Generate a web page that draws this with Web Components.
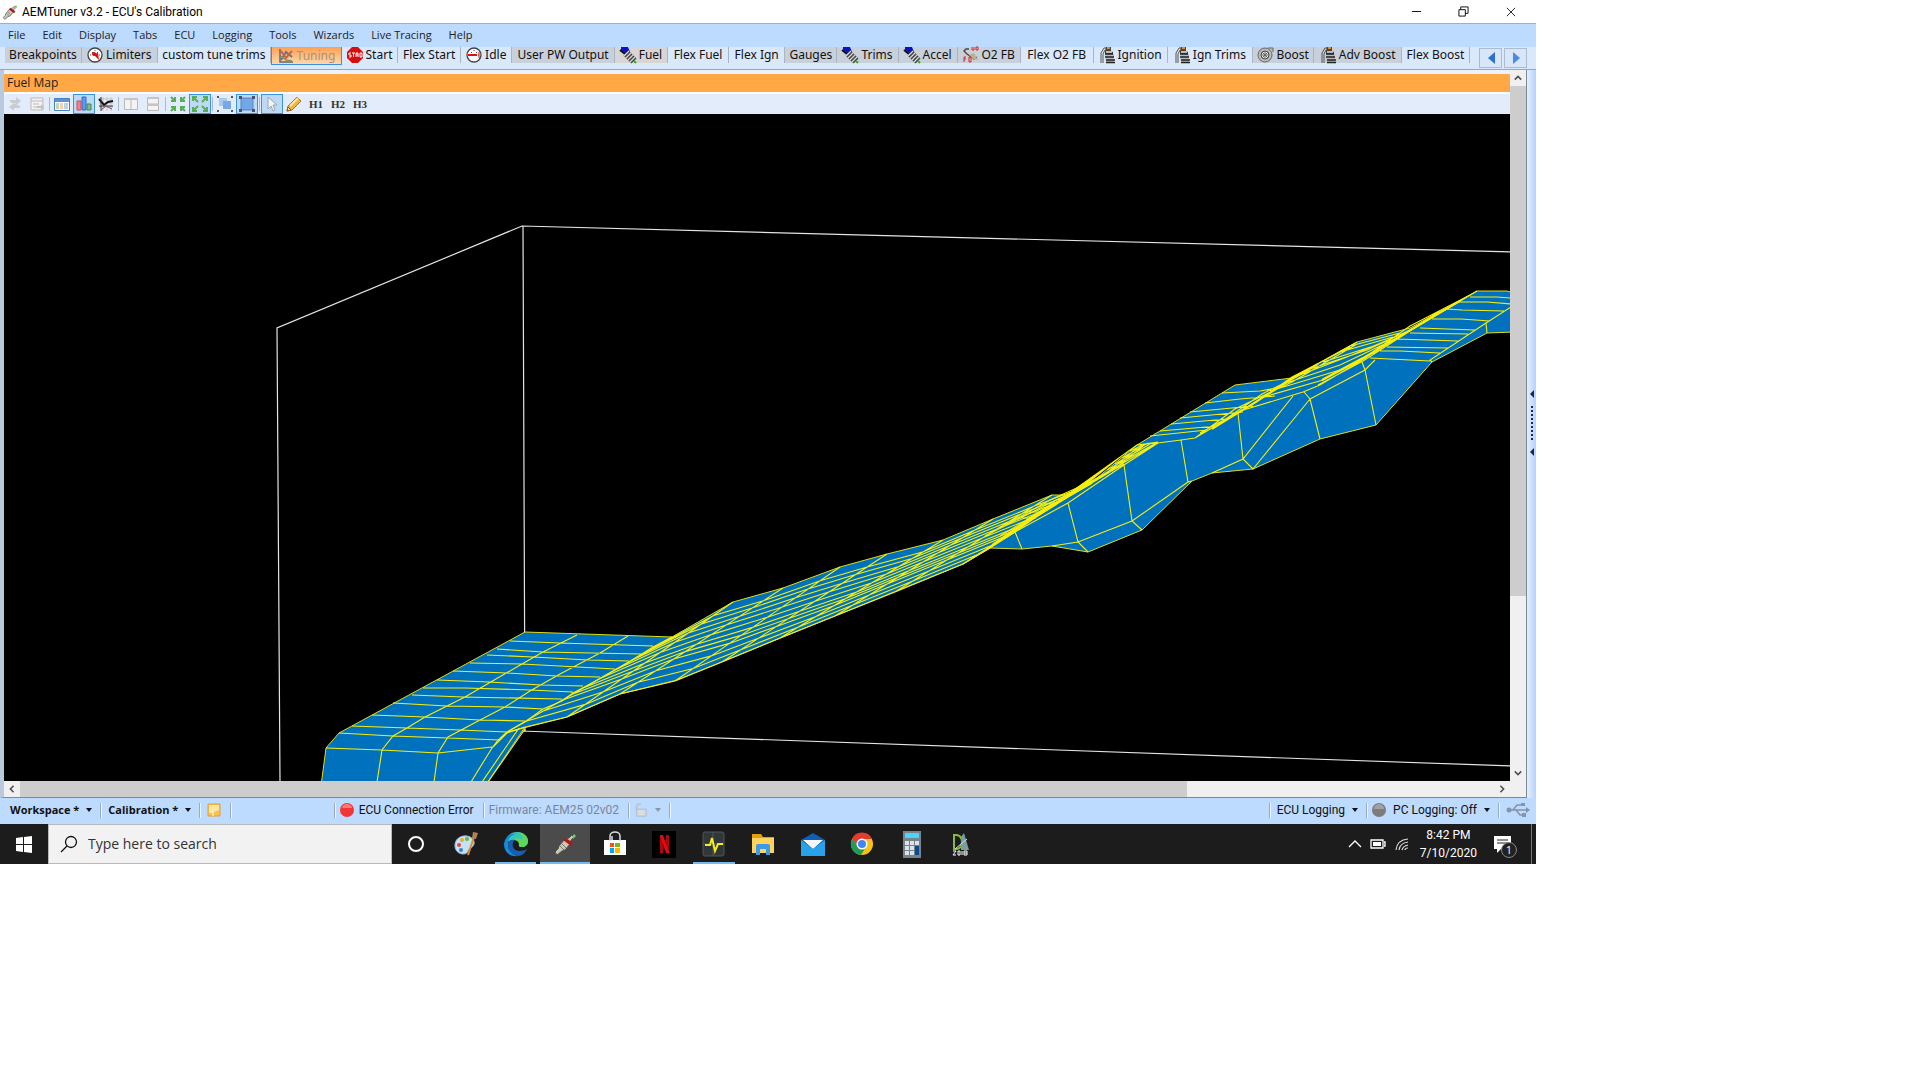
<!DOCTYPE html>
<html lang="en">
<head>
<meta charset="utf-8">
<title>AEMTuner v3.2 - ECU's Calibration</title>
<style>
  html, body { margin: 0; height: 100%; background: #fff; }
  body { font: 12px/16px Roboto, "Open Sans", sans-serif; color: #111; overflow: hidden; }
</style>
</head>
<body>
<tuner-desktop></tuner-desktop>

<script>
// ---- icons ----------------------------------------------------------------
const injector = `<path d="M2 20l2 3 5-4 3-1 5-6 1-4 3-3-2-2-3 3-4 1-6 7-1 3z" fill="#c9c9b4" stroke="#55554a"/><path d="M10 8l8 6 2-3-7-5z" fill="#b3151a"/><path d="M19 5l2-3 2 2-3 3z" fill="#7bc47b"/><path d="M7 14l4 4M9 12l4 4" stroke="#777"/>`;
const gauge = `<circle cx="8" cy="8" r="7" fill="#fff" stroke="#444" stroke-width="1.300"/><path d="M8 3v1M3 8h1M12 8h1M5 5l1 1M11 5l-1 1" stroke="#555"/>`;
const spark = `<path d="M2 16V6l3-5h3M4 16V7l2-4" fill="none" stroke="#555"/><path d="M7 0h5v4l2 1v2H6V4z" fill="#444"/><path d="M8 0h3v2H8z" fill="#ef8a20"/><path d="M7 4h6v2H7zM6 7h9v9H7z" fill="#bbb"/><path d="M6 7h8M6 10h9M7 13h9M7 15.500h9" stroke="#222" stroke-width="1.500"/>`;
const fuel = `<path d="M1 0h7l2 5-4 2-5-4z" fill="#0b12c9"/><path d="M0 3l5 4" stroke="#111" stroke-width="2"/><path d="M6 6l8 8" stroke="#444" stroke-width="7"/><path d="M4 9l5-5M6 11l5-5M8 13l5-5M10 15l5-5" stroke="#ddd" stroke-width="1.200"/><path d="M14 14l2 2" stroke="#3a3" stroke-width="2"/>`;
const arrowsIn = `<path d="M1 1l4 4M5 1v4H1M15 1l-4 4M11 1v4h4M1 15l4-4M1 11h4v4M15 15l-4-4M15 11h-4v4" fill="none" stroke="#58ad58" stroke-width="2"/>`;
const arrowsOut = `<path d="M6 6L1 1M1 5V1h4M10 6l5-5M11 1h4v4M6 10l-5 5M1 11v4h4M10 10l5 5M15 11v4h-4" fill="none" stroke="#58ad58" stroke-width="2"/>`;

const ICONS = {
  injector: [24, injector],
  limiter: [16, gauge + `<path d="M6 7l6 6-1-7z" fill="#d11"/><circle cx="7" cy="7" r="2" fill="#c11"/>`],
  idle: [16, gauge + `<path d="M2 8h9" stroke="#d11" stroke-width="2"/><path d="M13 5v6" stroke="#c11"/>`],
  chart: [16, `<path d="M2 1v13h13" fill="none" stroke="#667" stroke-width="1.500"/><path d="M3 12l5-8 6 5" fill="none" stroke="#5577a8" stroke-width="2"/><path d="M3 3l5 7 6-7" fill="none" stroke="#cf623d" stroke-width="2"/><path d="M3 8l5 4 6 1" fill="none" stroke="#7c985c" stroke-width="1.500"/>`],
  stop: [16, `<path d="M5 0h6l5 5v6l-5 5H5l-5-5V5z" fill="#d90d0d"/><path d="M4 6H2v2h2v2H2M5 6h3M6.500 6v4M9 10V6h2v4M9 8h2M13 10V6h2v4z" fill="none" stroke="#fff"/>`],
  fuel: [16, fuel],
  spark: [16, spark],
  o2: [16, `<path d="M6 2H3L1 4l3 3 7 5 3-2" fill="none" stroke="#444" stroke-width="1.400"/><path d="M6 8l5-2 4 7-5-1z" fill="#b8b18a"/><path d="M9 0v3h2V0M13 0h2v3h-2zM1 15v-5h2M1 12h2M6 10v5h2v-5z" fill="none" stroke="#e32222"/>`],
  turbo: [16, `<circle cx="7" cy="8" r="7" fill="#bbb" stroke="#666"/><path d="M10 1h5v4" stroke="#666" fill="#bbb"/><circle cx="7" cy="8" r="4" fill="#eee" stroke="#444"/><path d="M7 4v8M3 8h8M4 5l6 6M10 5l-6 6" stroke="#666"/>`],
  refresh: [16, `<path d="M3 6V4h6V1l5 4-5 4V7H5M13 10v2H7v3l-5-4 5-4" fill="#c9cdd2"/>`],
  sheet: [16, `<path d="M2 2h12v12H2z" fill="#f2f2f2" stroke="#bbb"/><path d="M2 5h12M4 8h6M4 11h4" stroke="#bbb"/><path d="M8 10h4V8l3 3-3 3v-2H8z" fill="#c0c0c0"/>`],
  table: [16, `<path d="M.5 2.500h15v12H.5z" fill="#fff" stroke="#4a80c0"/><path d="M1 3h14v3H1z" fill="#5b93d6"/><path d="M2 8h3M2 10h3M2 12h3" stroke="#7fb36f"/><path d="M6 8h3M6 10h3M6 12h3" stroke="#e7a05f"/><path d="M10 8h4M10 10h4M10 12h4" stroke="#6ea2dc"/>`],
  bars: [16, `<path d="M1 5h4v9H1z" fill="#f2808a" stroke="#d24a58"/><path d="M6 1h4v13H6z" fill="#5a9df0" stroke="#2c6ecb"/><path d="M11 8h4v6h-4z" fill="#7fb98a" stroke="#3d8b53"/>`],
  graph: [16, `<path d="M1 3h14M1 7h14M1 11h14M5 1v14M9 1v14M13 1v14" stroke="#c5c5c5"/><path d="M1 3l5 6 4-3 5-1" stroke="#111" stroke-width="2" fill="none"/><path d="M3 1v14M1 10h14" stroke="#333"/><path d="M3 14l5-4 6 3" stroke="#96435b" fill="none"/>`],
  cols: [16, `<path d="M1.500 2.500h13v11h-13zM8 3v11" fill="#f3f3f3" stroke="#b9b9b9"/><path d="M1 2h14v2H1z" fill="#c5c5c5"/>`],
  rows: [16, `<path d="M2.500 1.500h11v13h-11zM3 8h11" fill="#f3f3f3" stroke="#b9b9b9"/><path d="M2 1h12v2H2zM2 8h12v2H2z" fill="#c5c5c5"/>`],
  arrowsIn: [16, arrowsIn],
  arrowsOut: [16, arrowsOut],
  group: [16, `<path d="M2 2h8v8H2z" fill="#a8c9f3"/><path d="M6 5h8v8H6z" fill="#76a8e6"/><path d="M0 0h2v2H0zM14 0h2v2h-2zM0 14h2v2H0zM14 14h2v2h-2z" fill="#555"/>`],
  ungroup: [16, `<path d="M2 2h12v12H2z" fill="#73a8e8" stroke="#5481c8"/><path d="M0 0h3v3H0zM13 0h3v3h-3zM0 13h3v3H0zM13 13h3v3h-3z" fill="#46536b"/>`],
  pointer: [16, `<path d="M4 1v12l3-3 2 5 2-1-2-5h4z" fill="#f4f4f4" stroke="#9aa6b4"/>`],
  pencil: [16, `<path d="M1 15l1-5 9-9 4 4-9 9z" fill="#f3b33c" stroke="#a87322"/><path d="M4 10l8-8" stroke="#ffe5a0" stroke-width="2"/><path d="M1 15l1-4 3 3z" fill="#fbe3c4" stroke="#8a5a20"/>`],
  note: [14, `<path d="M1 1h12v12H1z" fill="#f9c04a" stroke="#e6a032"/><path d="M2 2h10v5L7 9 2 8z" fill="#ffe7a3"/><path d="M2 9h4v4" fill="none" stroke="#fff"/>`],
  red: [14, `<circle cx="7" cy="7" r="7" fill="#f03636"/><path d="M2 5a5 4 0 0 1 10 0z" fill="#f77"/>`],
  gray: [14, `<circle cx="7" cy="7" r="7" fill="#7c7c7c"/><path d="M2 6a5 5 0 0 1 10 0z" fill="#a2a2a2"/>`],
  lock: [16, `<path d="M3 8V4a3 3 0 0 1 5-2" fill="none" stroke="#bcc4d0" stroke-width="2"/><path d="M3 7h11v8H3z" fill="#cfd4dc" stroke="#b5bac4"/><path d="M5 9h7M5 11h7M5 13h7" stroke="#e6e9ee"/>`],
  usb: [24, `<g fill="none" stroke="#8793a8" stroke-width="1.500"><path d="M3 12h17M7 12l4-5h4M10 12l4 5h3"/></g><circle cx="3" cy="12" r="2.500" fill="#8793a8"/><path d="M20 9l4 3-4 3zM15 5h4v3h-4zM16 15h4v4h-4z" fill="#8793a8"/>`],
  min: [12, `<path d="M1 6h10" stroke="#000"/>`],
  restore: [12, `<path d="M1 4h7v7H1zM3 4V1h8v7H8" fill="none" stroke="#000"/>`],
  close: [12, `<path d="M1 1l10 10M11 1L1 11" stroke="#000"/>`],
  up: [10, `<path d="M1 7l4-4 4 4" fill="none" stroke="#505050" stroke-width="2"/>`],
  down: [10, `<path d="M1 3l4 4 4-4" fill="none" stroke="#505050" stroke-width="2"/>`],
  left: [10, `<path d="M7 1L3 5l4 4" fill="none" stroke="#505050" stroke-width="2"/>`],
  right: [10, `<path d="M3 1l4 4-4 4" fill="none" stroke="#505050" stroke-width="2"/>`],
  prev: [12, `<path d="M10 0v12L3 6z" fill="#2c6fd2"/>`],
  next: [12, `<path d="M3 0v12l7-6z" fill="#4a8ae0"/>`],
  windows: [16, `<path d="M0 2l7-1v7H0zM8 1l8-1v8H8zM0 9h7v7l-7-1zM8 9h8v8l-8-1z" fill="#fff"/>`],
  search: [18, `<circle cx="11" cy="7" r="5.500" fill="none" stroke="#111" stroke-width="1.300"/><path d="M7 11l-6 6" stroke="#111" stroke-width="1.300"/>`],
  cortana: [24, `<circle cx="12" cy="12" r="7" fill="none" stroke="#fff" stroke-width="2"/>`],
  paint: [24, `<path d="M1 15C0 7 7 3 13 4c6 1 9 6 6 10-2 3-4 2-5 5-1 5-12 4-13-4z" fill="#c4e2f3" stroke="#8fb5cf"/><circle cx="5" cy="13" r="2" fill="#e2453c"/><circle cx="8" cy="8" r="2" fill="#f2a52c"/><circle cx="13" cy="7" r="2" fill="#67b545"/><circle cx="7" cy="18" r="2" fill="#3d7cd0"/><path d="M14 23l6-18" stroke="#e08a2c" stroke-width="2"/><path d="M18 6l1-6 5 1-2 6z" fill="#b28356"/>`],
  edge: [24, `<path d="M1 13C1 5 6 0 13 0c6 0 11 4 11 9 0 4-3 6-6 6-4 0-3-2-3-3 0-2-2-4-5-4-5 0-9 3-9 5z" fill="#36c6b8"/><path d="M13 0c6 0 11 4 11 9 0 4-3 6-6 6-4 0-3-2-3-3 0-2-2-4-5-4 2-3 5-2 8 0 2-4-1-7-5-8z" fill="#5fd65a"/><path d="M0 12C1 5 6 1 12 2c-5 1-8 4-8 10 0 7 5 11 10 12C6 25 0 20 0 12z" fill="#1689da"/><path d="M4 12c0-3 3-5 7-4-4 2-3 11 4 11 4 0 6-1 8-2-2 4-5 7-9 7-5-1-10-5-10-12z" fill="#1460b0"/>`],
  store: [24, `<path d="M1 8h22v15H1z" fill="#fff"/><path d="M7 9V4a5 4 0 0 1 10 0v5M9 8V4" fill="none" stroke="#ddd" stroke-width="1.500"/><path d="M7 11h4v4H7z" fill="#f25022"/><path d="M12 11h5v4h-5z" fill="#7fba00"/><path d="M7 16h4v5H7z" fill="#00a4ef"/><path d="M12 16h5v5h-5z" fill="#ffb900"/>`],
  netflix: [24, `<path d="M0 -1h24v27H0z" fill="#000"/><path d="M8 3v18h3V3zM14 3v18h3V3z" fill="#b00610"/><path d="M8 3h3l6 18h-3z" fill="#e50914"/>`],
  pulse: [24, `<rect x="1" y="0" width="21" height="24" rx="2" fill="#30373a" stroke="#555"/><path d="M1 12h21M11 0v24" stroke="#50585c"/><path d="M3 13h5l2-7 3 13 3-7h5" fill="none" stroke="#f4ec1c" stroke-width="2"/>`],
  folder: [24, `<path d="M1 2h9l2 3h11v4H1z" fill="#e0a010"/><path d="M1 6h22v15H1z" fill="#ffd35c"/><path d="M5 23v-9q0-2 2-2h10q2 0 2 2v9h-4v-6H9v6z" fill="#3c9be8"/>`],
  mail: [24, `<path d="M0 8l12-7 12 7v15H0z" fill="#0f5fb5"/><path d="M2 8h20l-10 9z" fill="#fff"/><path d="M0 8l12 9 12-9v16H0z" fill="#28a3ea"/><path d="M4 8h16l-8 8z" fill="#f5f9fc"/>`],
  chrome: [24, `<circle cx="12" cy="12" r="11" fill="#fbc116"/><path d="M2 7a11 11 0 0 1 20 0H12l-4 7z" fill="#e33b2e"/><path d="M2 7a11 11 0 0 0 9 16l5-8-8-1z" fill="#239b56"/><circle cx="12" cy="12" r="5.500" fill="#fff"/><circle cx="12" cy="12" r="4" fill="#4286f5"/>`],
  calc: [24, `<path d="M3 -1h18v27H3z" fill="#76828c"/><path d="M5 1h14v5H5z" fill="#4dd5f7"/><path d="M5 9h4v4H5zM10 9h4v4h-4zM15 9h4v4h-4zM5 14h4v4H5zM10 14h4v4h-4zM5 19h4v4H5zM10 19h4v4h-4z" fill="#dce3e8"/><path d="M15 14h4v9h-4z" fill="#0b4a91"/>`],
  draft: [24, `<path d="M5 3h3q5 1 5 7t-5 7H5z" fill="none" stroke="#86b842" stroke-width="2"/><path d="M12 18V5l3-4 5 17z" fill="#789da0"/><path d="M6 17l12-10" stroke="#d7e2d5"/><path d="M4 19h3l-3 4h3M9 19h2v4H9zM13 19v4M15 19h3v4h-3zM15 21h3" fill="none" stroke="#fff"/>`],
  chevron: [14, `<path d="M1 10l6-6 6 6" fill="none" stroke="#fff" stroke-width="1.300"/>`],
  battery: [16, `<path d="M1 4h12v8H1zM14 6h1v4h-1" fill="none" stroke="#fff" stroke-width="1.300"/><path d="M3 6h8v4H3z" fill="#fff"/>`],
  wifi: [16, `<g fill="none" stroke="#ddd" stroke-width="1.200"><path d="M2 14Q3 4 14 3M5 14Q6 7 14 6M8 14Q9 10 14 9M11 14Q11 12 14 12"/></g>`],
  message: [20, `<path d="M1 2h17v13H8l-4 4v-4H1z" fill="#fff"/><path d="M4 6h11M4 9h11" stroke="#222"/>`]
};

class EcuIcon extends HTMLElement {
  constructor() {
    super();
    this.attachShadow({ mode: 'open' });
  }

  connectedCallback() {
    const [box, art] = ICONS[this.getAttribute('name')];
    const size = this.getAttribute('size') || box;
    this.shadowRoot.innerHTML = `
      <style>
        :host { display: inline-flex; flex: none; }
        svg { display: block; overflow: visible; }
      </style>
      <svg width="${size}" height="${size}" viewBox="0 0 ${box} ${box}" aria-hidden="true">${art}</svg>`;
  }
}
customElements.define('ecu-icon', EcuIcon);

// ---- title bar and menu -----------------------------------------------------
class TitleBar extends HTMLElement {
  constructor() {
    super();
    this.attachShadow({ mode: 'open' }).innerHTML = `
      <style>
        :host { display: flex; height: 23px; align-items: center; padding: 0 2px; background: #fff; color: #000; }
        .name { margin-left: 4px; flex: 1; }
        button { width: 47px; height: 23px; padding: 0; border: 0; background: none; display: grid; place-items: center; }
      </style>
      <ecu-icon name="injector" size="16"></ecu-icon>
      <span class="name"><slot></slot></span>
      <button aria-label="Minimize"><ecu-icon name="min" size="11"></ecu-icon></button>
      <button aria-label="Restore"><ecu-icon name="restore" size="11"></ecu-icon></button>
      <button aria-label="Close"><ecu-icon name="close" size="10"></ecu-icon></button>`;
  }
}
customElements.define('title-bar', TitleBar);

class MenuStrip extends HTMLElement {
  constructor() {
    super();
    const items = ['File', 'Edit', 'Display', 'Tabs', 'ECU', 'Logging', 'Tools', 'Wizards', 'Live Tracing', 'Help'];
    this.attachShadow({ mode: 'open' }).innerHTML = `
      <style>
        :host { display: flex; gap: 17px; height: 24px; box-sizing: border-box; padding: 0 0 1px 8px; align-items: center; background: #bddaff; border-top: 1px solid #8fb2d9; }
        button { font: 11px/16px "Open Sans", sans-serif; color: #222; border: 0; padding: 0; background: none; white-space: nowrap; }
      </style>
      ${items.map(t => `<button>${t}</button>`).join('')}`;
  }
}
customElements.define('menu-strip', MenuStrip);

// label, icon, share of the strip, kind
const TABS = [
  ['Breakpoints', '', 77, 'shade'], ['Limiters', 'limiter', 76, 'shade'], ['custom tune trims', '', 114, ''],
  ['Tuning', 'chart', 70, 'active'], ['Start', 'stop', 56, ''], ['Flex Start', '', 63, ''], ['Idle', 'idle', 51, ''],
  ['User PW Output', '', 103, 'shade'], ['Fuel', 'fuel', 53, 'warm'], ['Flex Fuel', '', 61, ''], ['Flex Ign', '', 56, ''],
  ['Gauges', '', 52, 'shade'], ['Trims', 'fuel', 61, 'shade'], ['Accel', 'fuel', 59, 'shade'], ['O2 FB', 'o2', 63, 'shade'],
  ['Flex O2 FB', '', 73, ''], ['Ignition', 'spark', 74, ''], ['Ign Trims', 'spark', 86, ''], ['Boost', 'turbo', 61, 'shade'],
  ['Adv Boost', 'spark', 88, 'shade'], ['Flex Boost', '', 68, '']
];

class TabStrip extends HTMLElement {
  constructor() {
    super();
    this.attachShadow({ mode: 'open' }).innerHTML = `
      <style>
        :host { display: flex; height: 23px; box-sizing: border-box; padding: 0 9px 0 5px; background: #dae8fb; border-bottom: 1px solid #94a8bf; }
        .tabs { display: flex; flex: 1; min-width: 0; }
        .tabs button {
          display: flex; align-items: center; justify-content: center; gap: 3px; min-width: 0; box-sizing: border-box; height: 16px;
          padding: 0; border: 0; border-right: 1px solid #aab4c2; background: none;
          font: 12px/16px "Noto Sans", sans-serif; color: #111; white-space: nowrap;
        }
        .tabs .shade { background: #c8d0dc; }
        .tabs .warm { background: #d8d5d6; }
        .tabs .active { height: 18px; background: linear-gradient(#ff9f50, #ffd9ae); border: 1px solid #3d8fdf; border-top: 0; color: #a9927d; }
        nav { display: flex; gap: 2px; padding: 1px 0 0 9px; }
        nav button { width: 23px; height: 20px; padding: 0; display: grid; place-items: center; border: 1px solid #aabbd2; background: #d9e5f8; }
      </style>
      <div class="tabs" role="tablist">
        ${TABS.map(([t, icon, w, kind]) => `
          <button role="tab" class="${kind}" style="flex: ${w} 1 0px">${icon ? `<ecu-icon name="${icon}"></ecu-icon>` : ''}<span>${t}</span></button>`).join('')}
      </div>
      <nav>
        <button aria-label="Previous tabs"><ecu-icon name="prev"></ecu-icon></button>
        <button aria-label="Next tabs"><ecu-icon name="next"></ecu-icon></button>
      </nav>`;
  }
}
customElements.define('tab-strip', TabStrip);

// ---- fuel map ---------------------------------------------------------------
class MapToolbar extends HTMLElement {
  constructor() {
    super();
    const tools = ['refresh', 'sheet', '|', 'table', '*bars', 'graph', '|', 'cols', 'rows', '|', 'arrowsIn', '*arrowsOut', '|', 'group', '*ungroup', '|', '*pointer', 'pencil'];
    this.attachShadow({ mode: 'open' }).innerHTML = `
      <style>
        :host { display: flex; height: 20px; background: #e3ecfb; border-top: 2px solid #f8fbff; }
        button { width: 22px; height: 20px; padding: 0; border: 1px solid transparent; background: none; display: grid; place-items: center; font: bold 11px/16px "Liberation Serif", serif; color: #333; }
        .on { background: #bcd9f5; border-color: #3d94dd; }
        i { width: 1px; margin: 3px 1px; background: #a9b8cc; }
      </style>
      ${tools.map(t => t === '|' ? '<i></i>' : `<button aria-label="${t.replace('*', '')}" class="${t[0] === '*' ? 'on' : ''}"><ecu-icon name="${t.replace('*', '')}"></ecu-icon></button>`).join('')}
      <button>H1</button><button>H2</button><button>H3</button>`;
  }
}
customElements.define('map-toolbar', MapToolbar);

class FuelSurface extends HTMLElement {
  constructor() {
    super();
    this.attachShadow({ mode: 'open' }).innerHTML = `
      <style>
        :host { display: block; min-height: 0; background: #000; overflow: hidden; }
        svg { display: block; width: 100%; height: 100%; }
        .cage { fill: none; stroke: #e4e4e4; stroke-width: 1.2; }
        .skin { fill: #0071bc; stroke: #e0dc18; }
        .mesh { fill: none; stroke: #f5ee12; stroke-width: 1.1; }
        .ridge { fill: none; stroke: #ffee00; stroke-width: 2; }
        .ridge.thick { stroke-width: 4; }
      </style>
      <svg viewBox="4 114 1506 667" preserveAspectRatio="xMinYMin slice" role="img" aria-label="Fuel map surface">
        <path class="cage" d="M280 782L277 328 522 226 1511 252M523 226L525 732M521 731L1511 766"/>
        <path class="skin" d="M525 632L672 637 733 602 783 588 840 567 887 554 943 540 993 519 1052 495 1066 495 1097 478 1137 445 1235 385 1292 378 1357 342 1410 328 1477 291 1507 291 1514 293V332L1487 333 1432 362 1376 425 1320 439 1253 469 1212 473 1192 481 1142 530 1088 552 1052 546 1022 549 990 548 963 564 677 680 620 694 567 717 525 727 485 786H321L326 748 339 733z"/>
        <path class="mesh" d="${this.slopeMesh()}"/>
        <path class="mesh" d="${this.plateauMesh()}"/>
        <path class="mesh" d="${this.crestMesh()}"/>
        <path class="ridge thick" d="M1027 521L1056 503"/>
        <path class="ridge" d="M992 545L1027 521M1056 503L1092 483M1212 429L1262 398 1292 379 1318 364M1322 380L1363 358 1412 329 1460 301"/>
      </svg>`;
  }

  poly(points) {
    return 'M' + points.map(p => p.map(v => v.toFixed(1)).join(' ')).join('L');
  }

  // long slope between the plateau and the crest, as a skewed grid
  slopeMesh() {
    const back = [[672, 637], [733, 602], [783, 588], [840, 567], [887, 554], [943, 540], [993, 519], [1052, 495], [1097, 478], [1137, 445]];
    const front = [[507, 732], [567, 717], [620, 694], [675, 681], [722, 662], [780, 638], [835, 616], [895, 592], [963, 564], [1015, 532]];
    const steps = [.12, .19, .27, .35, .44, .53, .6, .67, .78, .89, 1];
    const at = (j, t) => [0, 1].map(k => back[j][k] + (front[j][k] - back[j][k]) * t);
    const rows = steps.map(t => this.poly(back.map((p, j) => at(j, t))));
    const cols = back.map((p, j) => this.poly([back[j], at(j, .35), at(j, .67), front[j]]));
    return rows.join('') + cols.join('');
  }

  plateauMesh() {
    return [
      'M577 635L543 652 522 664 489 683 465 697 425 717 407 728 393 736 382 750 377 782',
      'M628 636L600 653 560 674 530 691 505 707 480 720 448 737 438 753 434 782',
      'M672 637L653 647 629 662 615 670 592 683 573 693 562 701 543 709 525 722 507 732 498 740 492 748 471 782',
      'M510 641L560 643 653 646M497 649L543 652 642 654M487 655L533 657 588 660 629 661',
      'M470 663L522 664 615 669M453 671L507 673 557 676 600 677M437 680L489 682 542 685 583 686',
      'M423 688L465 688 530 690 573 692M412 695L463 697 562 699M393 703L447 706 505 707 543 709',
      'M372 715L425 717 480 720 525 721M352 726L407 728 460 730 507 732M339 733L393 736 448 738 500 740',
      'M326 748L382 750 438 753 492 747M525 727L507 733 493 747M519 728L482 782M525 729L488 782'
    ].join('');
  }

  crestMesh() {
    return [
      // cliff faces
      'M1015 532L1022 549M1068 503L1078 542 1088 552M1124 465L1132 521 1142 530M1181 440L1188 482 1192 481',
      'M1052 546L1078 542 1132 521 1188 482M1238 413L1243 459 1253 469M1212 473L1243 459 1293 396M1310 399L1253 469',
      'M1304 392L1310 399 1320 439M1310 399L1365 370 1375 360M1362 362L1365 370 1376 425M1432 362L1430 360 1486 323 1511 307M1486 323L1487 333',
      // folded rows
      'M963 564L990 548 1015 532 1068 503 1124 465 1158 443 1181 440 1195 438 1238 413 1262 398 1292 378 1357 342',
      'M1040 504H1055M1025 512H1044M1017 518H1036M1005 525L1052 499 1097 479M985 536L1050 503 1097 480M1000 536L1070 494 1124 464M1010 532L1075 493 1110 472',
      'M1097 478L1158 443M1107 470L1158 442M1115 464L1152 443M1122 458L1148 443M1130 451L1145 444M1102 477L1137 448M1112 471L1143 446M1137 445L1158 443',
      'M1222 393L1260 391 1282 387M1205 403L1240 399 1275 396M1190 412L1253 406M1180 418L1243 412M1171 424L1226 419M1160 431L1217 426M1150 436L1207 430M1137 445L1158 442',
      'M1195 438L1235 409 1292 382 1357 344M1200 433L1255 403 1292 377 1350 347M1220 423L1262 394 1310 370',
      'M1240 411L1303 392 1320 385 1367 357M1260 398L1323 380 1370 355M1270 391L1340 370 1383 348M1280 385L1340 365 1397 338M1292 378L1347 357 1407 332M1307 370L1367 350 1410 330M1323 362L1380 344 1410 330M1340 352L1393 337M1350 346L1400 333',
      'M1318 385L1363 361 1410 331 1477 291M1325 379L1367 356 1410 326 1470 295M1375 353L1440 311',
      'M1470 297H1497L1511 298M1457 302H1487L1511 304M1447 309L1462 310 1504 311M1432 319H1461L1490 321M1420 328L1475 330M1410 333L1468 334M1397 339L1458 341M1387 347L1448 348M1380 351H1400L1440 353M1370 358L1430 361'
    ].join('');
  }
}
customElements.define('fuel-surface', FuelSurface);

class ScrollTrack extends HTMLElement {
  constructor() {
    super();
    this.attachShadow({ mode: 'open' });
  }

  connectedCallback() {
    const vertical = this.hasAttribute('vertical');
    const [a, b] = vertical ? ['up', 'down'] : ['left', 'right'];
    this.shadowRoot.innerHTML = `
      <style>
        :host { display: flex; flex-direction: ${vertical ? 'column' : 'row'}; background: #f0f0f0; min-width: 0; min-height: 0; }
        button { flex: none; width: 16px; height: 16px; padding: 0; border: 0; background: #f0f0f0; display: grid; place-items: center; }
        .thumb { flex: ${this.getAttribute('thumb')} 1 0px; background: #cdcdcd; }
        .rest { flex: ${this.getAttribute('rest')} 1 0px; }
      </style>
      <button aria-label="Scroll ${a}"><ecu-icon name="${a}" size="8"></ecu-icon></button>
      <div class="thumb"></div><div class="rest"></div>
      <button aria-label="Scroll ${b}"><ecu-icon name="${b}" size="8"></ecu-icon></button>`;
  }
}
customElements.define('scroll-track', ScrollTrack);

class MapPanel extends HTMLElement {
  constructor() {
    super();
    this.attachShadow({ mode: 'open' }).innerHTML = `
      <style>
        :host { display: grid; grid-template-columns: minmax(0, 1fr) 9px; min-height: 0; background: #eaf2fd; }
        .frame { display: grid; grid-template: minmax(0, 1fr) 16px / minmax(0, 1fr) 16px; border: solid #7f8792; border-width: 0 1px 1px 4px; border-left-color: #b9c9de; min-height: 0; }
        .view { display: grid; grid-template-rows: 22px 22px minmax(0, 1fr); min-height: 0; }
        h2 { margin: 4px 0 0; height: 18px; padding-left: 3px; background: #ffa845; font: 12px/17px "Open Sans", sans-serif; color: #222; }
        .corner { background: #f0f0f0; }
        .grip { display: flex; flex-direction: column; align-items: center; justify-content: center; gap: 8px; padding-bottom: 22px; background: linear-gradient(90deg, #e4effe, #b4d3fb); }
        .grip b { border: solid transparent; border-width: 4px 4px 4px 0; border-right-color: #16294a; }
        .grip i { height: 34px; border-left: 2px dotted #16294a; }
      </style>
      <div class="frame">
        <div class="view">
          <h2>Fuel Map</h2>
          <map-toolbar></map-toolbar>
          <fuel-surface></fuel-surface>
        </div>
        <scroll-track vertical thumb="510" rest="169"></scroll-track>
        <scroll-track thumb="1169" rest="307"></scroll-track>
        <div class="corner"></div>
      </div>
      <div class="grip"><b></b><i></i><b></b></div>`;
  }
}
customElements.define('map-panel', MapPanel);

// ---- status bar and taskbar ---------------------------------------------------
class StatusStrip extends HTMLElement {
  constructor() {
    super();
    this.attachShadow({ mode: 'open' }).innerHTML = `
      <style>
        :host { display: flex; align-items: center; height: 26px; box-sizing: border-box; padding: 0 6px 2px 10px; background: #bddaff; white-space: nowrap; }
        button { display: flex; align-items: center; gap: 7px; padding: 0 8px 0 0; border: 0; background: none; font: inherit; color: #111; }
        button.bold { font: bold 11px/16px "Open Sans", sans-serif; }
        button::after { content: ""; border: solid transparent; border-width: 4px 3px 0; border-top-color: #111; }
        button.dim::after { border-top-color: #8c97a8; }
        i { width: 1px; height: 15px; background: #97abc6; border-right: 1px solid #eef5ff; margin-right: 4px; }
        i.wide { margin-right: 6px; }
        .item { display: flex; align-items: center; gap: 5px; padding-right: 9px; }
        .dim { color: #7a8798; }
        .gap { flex: 102 0 0px; }
        .fill { flex: 622 0 0px; }
      </style>
      <button class="bold">Workspace *</button><i class="wide"></i>
      <button class="bold">Calibration *</button><i class="wide"></i>
      <span class="item"><ecu-icon name="note"></ecu-icon></span><i></i>
      <span class="gap"></span><i></i>
      <span class="item"><ecu-icon name="red"></ecu-icon>ECU Connection Error</span><i></i>
      <span class="item dim">Firmware: AEM25 02v02</span><i></i>
      <button class="dim" aria-label="Lock"><ecu-icon name="lock" size="14"></ecu-icon></button><i></i>
      <span class="fill"></span><i class="wide"></i>
      <button>ECU Logging</button><i></i>
      <button><ecu-icon name="gray"></ecu-icon>PC Logging: Off</button><i class="wide"></i>
      <ecu-icon name="usb"></ecu-icon>`;
  }
}
customElements.define('status-strip', StatusStrip);

class TaskBar extends HTMLElement {
  constructor() {
    super();
    const apps = ['cortana', 'paint', 'edge', 'injector', 'store', 'netflix', 'pulse', 'folder', 'mail', 'chrome', 'calc', 'draft'];
    const running = ['edge', 'injector', 'pulse'];
    this.attachShadow({ mode: 'open' }).innerHTML = `
      <style>
        :host { display: flex; height: 40px; background: #1c1c1c; color: #fff; }
        button { padding: 0; border: 0; background: none; display: grid; place-items: center; color: #fff; }
        .start { width: 48px; }
        label { display: flex; align-items: center; gap: 10px; flex: 344 1 344px; box-sizing: border-box; padding-left: 11px; background: #f2f2f2; border: 1px solid #b8b8b8; min-width: 0; }
        input { flex: 1; min-width: 0; border: 0; padding: 0; background: none; font: 14px/20px "Open Sans", sans-serif; }
        input::placeholder { color: #333; opacity: 1; }
        .apps { display: flex; flex: 595 1 595px; }
        .apps button { flex: 1; position: relative; }
        .apps .on::after { content: ""; position: absolute; left: 4px; right: 4px; bottom: 0; height: 2px; background: #76b9ed; }
        .apps .current { background: #4b4b4b; }
        .apps .current::after { left: 0; right: 0; }
        .gap { flex: 362 1 362px; }
        .tray { display: flex; align-items: center; gap: 8px; }
        .clock { margin: 0 8px 0 2px; text-align: center; font: 12px/18px Roboto, sans-serif; }
        .note { position: relative; }
        .note span { position: absolute; left: 8px; top: 8px; width: 14px; height: 14px; border: 1px solid #888; border-radius: 50%; background: #222; font: 11px/14px "Open Sans", sans-serif; }
        .peek { width: 4px; margin-left: 10px; height: 40px; border-left: 1px solid #777; }
      </style>
      <button class="start" aria-label="Start"><ecu-icon name="windows"></ecu-icon></button>
      <label><ecu-icon name="search"></ecu-icon><input type="search" aria-label="Search" placeholder="Type here to search"></label>
      <div class="apps">
        ${apps.map(a => `<button aria-label="${a}" class="${running.includes(a) ? 'on' : ''} ${a === 'injector' ? 'current' : ''}"><ecu-icon name="${a}"></ecu-icon></button>`).join('')}
      </div>
      <div class="gap"></div>
      <div class="tray">
        <ecu-icon name="chevron"></ecu-icon>
        <ecu-icon name="battery"></ecu-icon>
        <ecu-icon name="wifi"></ecu-icon>
        <div class="clock">8:42 PM<br>7/10/2020</div>
        <button class="note" aria-label="Notifications"><ecu-icon name="message"></ecu-icon><span>1</span></button>
        <div class="peek"></div>
      </div>`;
  }
}
customElements.define('task-bar', TaskBar);

class TunerDesktop extends HTMLElement {
  constructor() {
    super();
    this.attachShadow({ mode: 'open' }).innerHTML = `
      <style>
        :host { display: grid; grid-template-rows: auto auto auto minmax(0, 1fr) auto auto; grid-template-columns: minmax(0, 1fr); width: 80vw; height: 80vh; }
      </style>
      <title-bar>AEMTuner v3.2 - ECU's Calibration</title-bar>
      <menu-strip></menu-strip>
      <tab-strip></tab-strip>
      <map-panel></map-panel>
      <status-strip></status-strip>
      <task-bar></task-bar>`;
  }
}
customElements.define('tuner-desktop', TunerDesktop);
</script>
</body>
</html>
